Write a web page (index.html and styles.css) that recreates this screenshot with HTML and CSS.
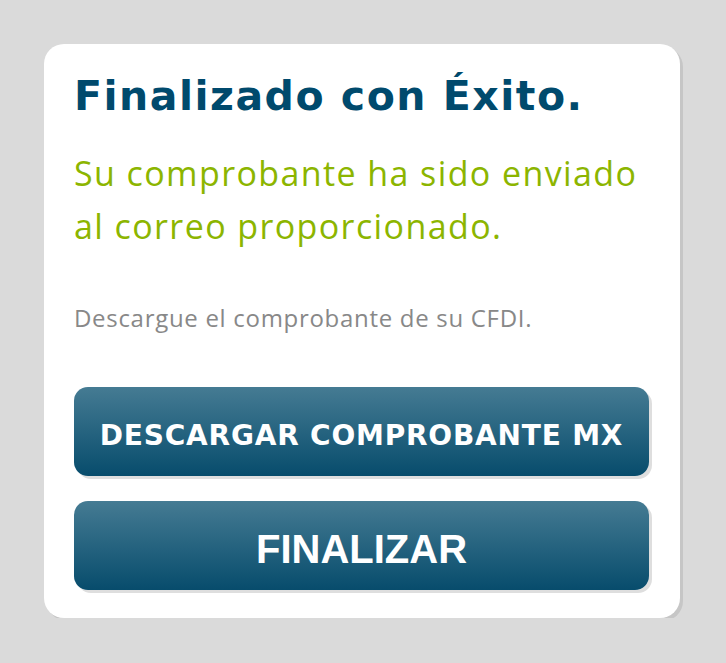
FILE: index.html
```html
<!DOCTYPE html>
<html lang="es">
<head>
    <meta charset="UTF-8">
    <meta name="viewport" content="width=device-width, initial-scale=1.0">
    <title>Finalizado</title>
    <link rel="stylesheet" href="styles.css">
</head>
<body>
    <div class="card">
        <h1 class="title">Finalizado con Éxito.</h1>
        <p class="subtitle">Su comprobante ha sido enviado al correo proporcionado.</p>
        <p class="note">Descargue el comprobante de su CFDI.</p>
        <div class="actions">
            <button class="btn" type="button">DESCARGAR COMPROBANTE MX</button>
            <button class="btn btn-lg" type="button">FINALIZAR</button>
        </div>
    </div>
</body>
</html>
```

FILE: styles.css
```css
*{margin:0;padding:0;box-sizing:border-box;}
body{
    background:#dadada;
    font-family:"Open Sans","Liberation Sans",sans-serif;
    padding:44px 46px 0 44px;
}
.card{
    background:#fff;
    border-radius:20px;
    box-shadow:3px 3px 0 #c6c6c6;
    padding:32px 30px 0 30px;
    height:574px;
}
.title{
    color:#004a6d;
    font-family:"DejaVu Sans","Liberation Sans",sans-serif;
    font-size:41px;
    font-weight:700;
    line-height:40px;
    letter-spacing:1.5px;
}
.subtitle{
    color:#8cb500;
    font-size:34px;
    line-height:53px;
    margin-top:31px;
    letter-spacing:1.4px;
}
.note{
    color:#888;
    font-size:24px;
    line-height:30px;
    margin-top:50px;
    letter-spacing:0.7px;
}
.actions{
    display:flex;
    flex-direction:column;
    gap:25px;
    margin-top:54px;
    padding-right:1px;
}
.btn{
    height:89px;
    padding-top:8px;
    border:none;
    border-radius:14px;
    background:linear-gradient(#457b93,#074c6c);
    box-shadow:3px 3px 0 #dedede;
    color:#fff;
    font-family:"DejaVu Sans","Liberation Sans",sans-serif;
    font-size:28px;
    font-weight:700;
    letter-spacing:0.8px;
}
.btn-lg{
    font-family:"Liberation Sans",Arial,sans-serif;
    font-size:40px;
    letter-spacing:0;
}
```
